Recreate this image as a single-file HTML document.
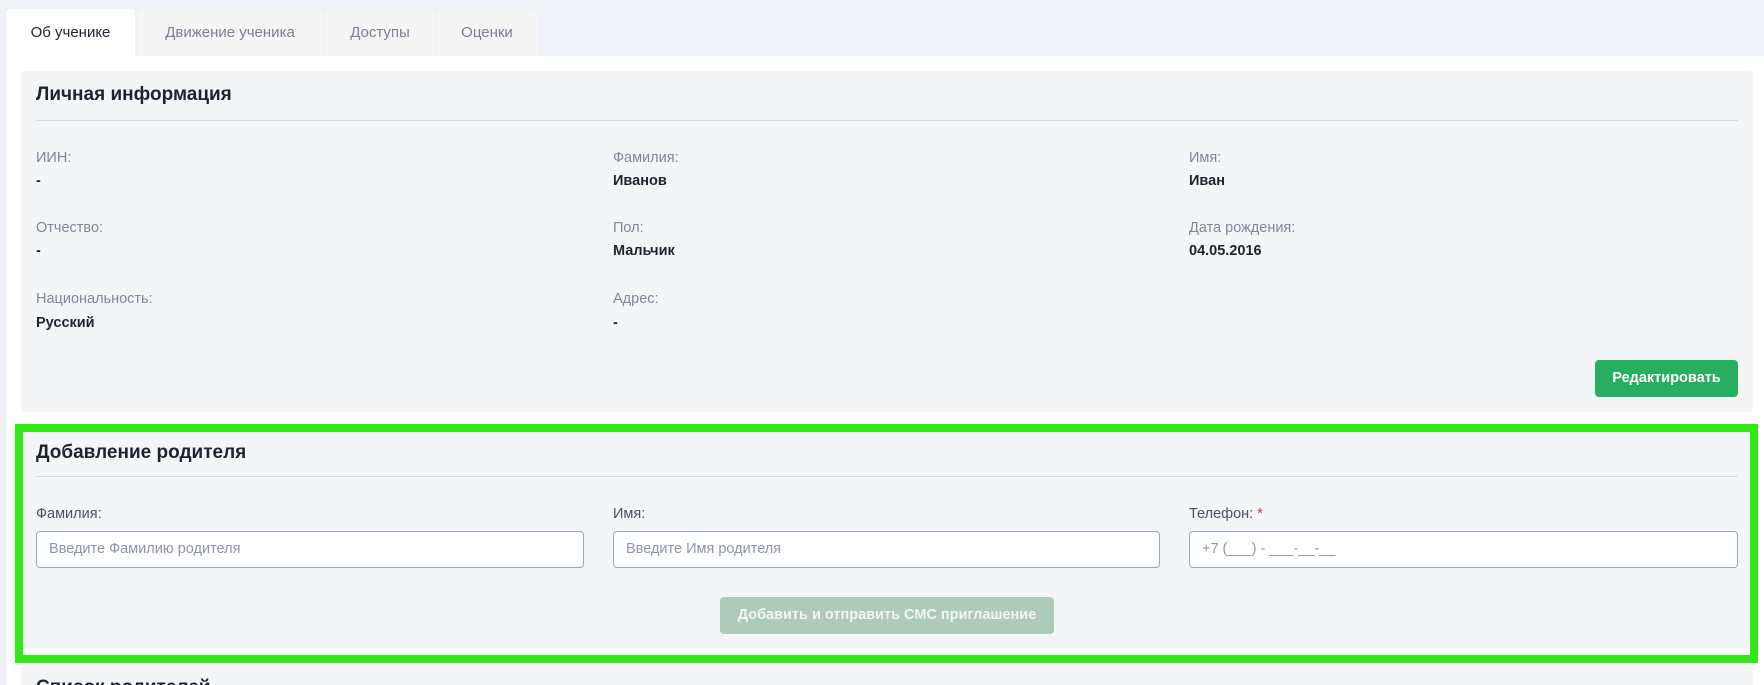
<!DOCTYPE html>
<html><head><meta charset="utf-8"><style>
*{box-sizing:border-box;margin:0;padding:0}
html,body{width:1764px;height:685px;overflow:hidden}
body{background:#eef1f5;font-family:"Liberation Sans",sans-serif;position:relative}
.a{position:absolute}
.tab{position:absolute;top:9px;height:47px;background:#f5f5f6;border-radius:4px 4px 0 0;color:#7a8193;font-size:15px;text-align:center;line-height:47px}
.panel{position:absolute;left:6px;top:56px;width:1758px;height:629px;background:#fff}
.card{position:absolute;background:#f4f5f7;border-radius:4px}
.h{position:absolute;font-size:19px;color:#1e2330}
.sep{position:absolute;height:1px;background:#d6dae2}
.lb{position:absolute;font-size:14.5px;color:#7e879a}
.vl{position:absolute;font-size:14.5px;color:#1e2330;font-weight:bold}
.lb2{position:absolute;font-size:14.5px;color:#4b5160}
.in{position:absolute;height:37px;background:#fff;border:1px solid #94a8bd;border-radius:4px;font-size:14.5px;color:#8d95a3;padding-left:12px;line-height:35px}
</style></head><body>
<div class="tab" style="left:6px;width:129px;background:#fff;color:#1e2330">Об ученике</div>
<div class="tab" style="left:137px;width:186px">Движение ученика</div>
<div class="tab" style="left:325px;width:110px">Доступы</div>
<div class="tab" style="left:437px;width:100px">Оценки</div>
<div class="panel"></div>
<div class="card" style="left:21px;top:71px;width:1732px;height:341px"></div>
<div class="h" style="left:36px;top:84px;font-weight:600">Личная информация</div>
<div class="sep" style="left:36px;top:120px;width:1702px"></div>
<div class="lb" style="left:36px;top:150px">ИИН:</div><div class="vl" style="left:36px;top:173px">-</div>
<div class="lb" style="left:613px;top:150px">Фамилия:</div><div class="vl" style="left:613px;top:173px">Иванов</div>
<div class="lb" style="left:1189px;top:150px">Имя:</div><div class="vl" style="left:1189px;top:173px">Иван</div>
<div class="lb" style="left:36px;top:220px">Отчество:</div><div class="vl" style="left:36px;top:243px">-</div>
<div class="lb" style="left:613px;top:220px">Пол:</div><div class="vl" style="left:613px;top:243px">Мальчик</div>
<div class="lb" style="left:1189px;top:220px">Дата рождения:</div><div class="vl" style="left:1189px;top:243px">04.05.2016</div>
<div class="lb" style="left:36px;top:291px">Национальность:</div><div class="vl" style="left:36px;top:315px">Русский</div>
<div class="lb" style="left:613px;top:291px">Адрес:</div><div class="vl" style="left:613px;top:315px">-</div>
<div class="a" style="left:1595px;top:360px;width:143px;height:37px;background:#27ae60;border-radius:4px;color:#fff;font-weight:bold;font-size:14.5px;text-align:center;line-height:37px">Редактировать</div>
<div class="card" style="left:21px;top:665px;width:1732px;height:40px"></div>
<div class="h" style="left:36px;top:677px;font-weight:bold">Список родителей</div>
<div class="a" style="left:15px;top:424px;width:1743px;height:239px;border:8px solid #33e817;background:#fff"><div class="a" style="left:0;top:0;width:1727px;height:216px;background:#f4f5f7"></div></div>
<div class="h" style="left:36px;top:442px;font-weight:600">Добавление родителя</div>
<div class="sep" style="left:36px;top:476px;width:1702px"></div>
<div class="lb2" style="left:36px;top:506px">Фамилия:</div>
<div class="lb2" style="left:613px;top:506px">Имя:</div>
<div class="lb2" style="left:1189px;top:506px">Телефон: <span style="color:#e0245e">*</span></div>
<div class="in" style="left:36px;top:531px;width:548px">Введите Фамилию родителя</div>
<div class="in" style="left:613px;top:531px;width:547px">Введите Имя родителя</div>
<div class="in" style="left:1189px;top:531px;width:549px">+7 (___) - ___-__-__</div>
<div class="a" style="left:720px;top:597px;width:334px;height:37px;background:#adcbb8;border-radius:4px;color:#f2f7f3;font-weight:bold;font-size:14.5px;text-align:center;line-height:37px">Добавить и отправить СМС приглашение</div>
</body></html>
